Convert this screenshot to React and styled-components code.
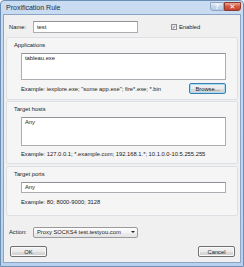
import React from 'react';
import styled, { createGlobalStyle } from 'styled-components';

const Global = createGlobalStyle`
  html, body { margin: 0; padding: 0; background: #ffffff; }
  body { font-family: "Liberation Sans", "DejaVu Sans", sans-serif; }
  * { box-sizing: border-box; }
`;

const Window = styled.div`
  width: 244px;
  height: 267px;
  display: flex;
  flex-direction: column;
  background: linear-gradient(180deg, #c9dcf1 0%, #b9d1ec 100%);
  border: 1px solid #6d8fb5;
  border-radius: 4px 4px 0 0;
  padding: 0 2px 3px 2px;
  overflow: hidden;
`;

const TitleBar = styled.div`
  height: 13px;
  display: flex;
  align-items: center;
  justify-content: space-between;
  padding-left: 3px;
`;

const Title = styled.span`
  font-size: 7px;
  color: #1e2d44;
`;

const Caption = styled.div`
  display: flex;
  align-self: flex-start;
  margin-top: 1px;
`;

const CapButton = styled.div`
  width: ${p => p.$wide ? 17 : 14}px;
  height: 9px;
  border: 1px solid ${p => p.$close ? '#8f3a2d' : '#8ea6c4'};
  border-radius: ${p => p.$close ? '0 0 3px 0' : '0 0 0 3px'};
  background: ${p => p.$close
    ? 'linear-gradient(180deg, #e8a696 0%, #d25a45 50%, #c4402c 100%)'
    : 'linear-gradient(180deg, #e6eef8 0%, #c6d6ea 50%, #b6cae3 100%)'};
  display: flex;
  align-items: center;
  justify-content: center;
  color: #ffffff;
  font-size: 7px;
  font-weight: bold;
  line-height: 1;
`;

const Body = styled.div`
  flex: 1;
  background: #f0f0f0;
  border: 1px solid #8ba5c6;
  padding: 6px 2px 4px 2px;
  display: flex;
  flex-direction: column;
`;

const Text = styled.span`
  font-size: 5.8px;
  color: #1a1a1a;
  white-space: nowrap;
`;

const NameRow = styled.div`
  display: flex;
  align-items: center;
  height: 12px;
  padding-left: 3px;
`;

const FieldLabel = styled(Text)`
  width: 24px;
`;

const Field = styled.div`
  width: ${p => p.$w}px;
  height: ${p => p.$h}px;
  background: #ffffff;
  border: 1px solid #abadb3;
  border-top-color: #8e9299;
  padding: 1px 3px;
  font-size: 5.8px;
  color: #1a1a1a;
  display: flex;
  align-items: ${p => p.$top ? 'flex-start' : 'center'};
  justify-content: space-between;
`;

const Check = styled.label`
  display: flex;
  align-items: center;
  gap: 2px;
  margin-left: 33px;
`;

const Box = styled.span`
  width: 6px;
  height: 6px;
  border: 1px solid #8f8f8f;
  background: linear-gradient(135deg, #dcdcdc, #ffffff);
  display: flex;
  align-items: center;
  justify-content: center;
  font-size: 5px;
  line-height: 1;
  color: #2d4c8a;
`;

const Group = styled.div`
  margin-top: ${p => p.$gap}px;
  height: ${p => p.$h}px;
  border: 1px solid #dde1e5;
  border-radius: 2px;
  background: #f5f5f5;
  padding: 3px 11px 0 7px;
  display: flex;
  flex-direction: column;
`;

const GroupTitle = styled(Text)`
  height: 8px;
  display: flex;
  align-items: center;
  margin-bottom: 4px;
`;

const Area = styled(Field)`
  width: auto;
  margin-left: 7px;
`;

const Hint = styled.div`
  display: flex;
  align-items: center;
  justify-content: space-between;
  margin-left: 7px;
  height: ${p => p.$h}px;
`;

const Button = styled.div`
  width: ${p => p.$w}px;
  height: ${p => p.$h || 11}px;
  border: 1px solid ${p => p.$focus ? '#3c7fb1' : '#707070'};
  border-radius: 2px;
  background: linear-gradient(180deg, #f2f2f2 0%, #ebebeb 50%, #dddddd 51%, #cfcfcf 100%);
  box-shadow: ${p => p.$focus ? 'inset 0 0 0 1px #a8dcf5' : 'inset 0 0 0 1px #fbfbfb'};
  display: flex;
  align-items: center;
  justify-content: center;
  font-size: 5.8px;
  color: #1a1a1a;
`;

const ActionRow = styled(NameRow)`
  margin-top: 10px;
`;

const Select = styled(Field)`
  background: linear-gradient(180deg, #fdfdfd 0%, #f4f4f4 50%, #ececec 51%, #e4e4e4 100%);
  border-color: #9a9a9a;
  border-radius: 2px;
  padding-right: 2px;
`;

const Arrow = styled.span`
  width: 0;
  height: 0;
  border-left: 2px solid transparent;
  border-right: 2px solid transparent;
  border-top: 2px solid #222;
`;

const Buttons = styled.div`
  margin-top: auto;
  display: flex;
  justify-content: space-between;
  padding: 0 3px 1px 4px;
`;

export default function App() {
  return (
    <>
      <Global />
      <Window>
        <TitleBar>
          <Title>Proxification Rule</Title>
          <Caption>
            <CapButton>?</CapButton>
            <CapButton $close $wide>✕</CapButton>
          </Caption>
        </TitleBar>
        <Body>
          <NameRow>
            <FieldLabel>Name:</FieldLabel>
            <Field $w={105} $h={12}>test</Field>
            <Check>
              <Box>✓</Box>
              <Text>Enabled</Text>
            </Check>
          </NameRow>

          <Group $gap={4} $h={63}>
            <GroupTitle>Applications</GroupTitle>
            <Area $h={27} $top>tableau.exe</Area>
            <Hint $h={17}>
              <Text>Example: iexplore.exe; "some app.exe"; fire*.exe; *.bin</Text>
              <Button $w={37} $h={11} $focus>Browse...</Button>
            </Hint>
          </Group>

          <Group $gap={1} $h={63}>
            <GroupTitle>Target hosts</GroupTitle>
            <Area $h={29} $top>Any</Area>
            <Hint $h={16}>
              <Text>Example: 127.0.0.1; *.example.com; 192.168.1.*; 10.1.0.0-10.5.255.255</Text>
            </Hint>
          </Group>

          <Group $gap={2} $h={50}>
            <GroupTitle>Target ports</GroupTitle>
            <Area $h={11} $top>Any</Area>
            <Hint $h={18}>
              <Text>Example: 80; 8000-9000; 3128</Text>
            </Hint>
          </Group>

          <ActionRow>
            <FieldLabel>Action:</FieldLabel>
            <Select $w={105} $h={11}>
              <span>Proxy SOCKS4 test.testyou.com</span>
              <Arrow />
            </Select>
          </ActionRow>

          <Buttons>
            <Button $w={37}>OK</Button>
            <Button $w={37}>Cancel</Button>
          </Buttons>
        </Body>
      </Window>
    </>
  );
}
